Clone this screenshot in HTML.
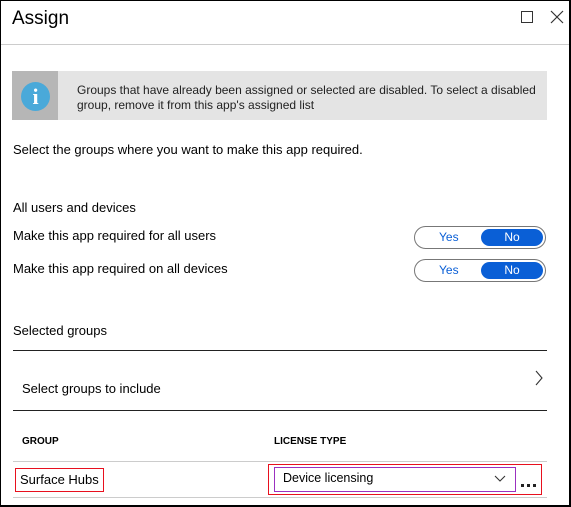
<!DOCTYPE html>
<html><head><meta charset="utf-8"><style>
*{margin:0;padding:0;box-sizing:border-box}
body{width:571px;height:507px;overflow:hidden;background:#fff;font-family:"Liberation Sans",sans-serif;color:#000;position:relative}
.frame{position:absolute;left:0;top:0;width:571px;height:507px;border:1px solid #000;border-right-width:2px;border-bottom-width:2px}
.a{position:absolute;white-space:nowrap}
.t{font-size:13px}
.line{position:absolute;height:1px}
.tog{position:absolute;left:414px;width:132px;height:23px;border:1px solid #777;border-radius:12px}
.tog .y{position:absolute;left:24px;top:3px;font-size:12px;color:#0a5fd6}
.tog .n{position:absolute;left:66px;top:2px;width:62px;height:17px;border-radius:9px;background:#0a5fd6;color:#fff;font-size:12px;text-align:center;line-height:17px}
.dot{position:absolute;width:3px;height:3px;background:#222;top:484px}
</style></head><body>
<div class="frame"></div>
<div class="a" style="left:12px;top:8px;font-size:19px">Assign</div>
<div class="a" style="left:521px;top:11px;width:12px;height:12px;border:1px solid #333"></div>
<svg class="a" style="left:550px;top:10px" width="14" height="14"><path d="M1 1L13 13M13 1L1 13" stroke="#333" stroke-width="1.2"/></svg>
<div class="line" style="left:1px;top:44px;width:568px;background:#ccc"></div>
<div class="a" style="left:12px;top:71px;width:535px;height:49px;background:#e4e4e4"></div>
<div class="a" style="left:12px;top:71px;width:46px;height:49px;background:#b6b6b6"></div>
<div class="a" style="left:21px;top:82px;width:29px;height:29px;border-radius:50%;background:#4aa9d9;color:#fff;font-family:'Liberation Serif',serif;font-weight:bold;font-size:22px;text-align:center;line-height:29px">i</div>
<div class="a" style="left:77px;top:83px;font-size:12px;line-height:15px;color:#222">Groups that have already been assigned or selected are disabled. To select a disabled<br>group, remove it from this app's assigned list</div>
<div class="a t" style="left:13px;top:142px">Select the groups where you want to make this app required.</div>
<div class="a t" style="left:13px;top:200px">All users and devices</div>
<div class="a t" style="left:13px;top:228px">Make this app required for all users</div>
<div class="a t" style="left:13px;top:261px">Make this app required on all devices</div>
<div class="tog" style="top:226px"><span class="y">Yes</span><span class="n">No</span></div>
<div class="tog" style="top:259px"><span class="y">Yes</span><span class="n">No</span></div>
<div class="a t" style="left:13px;top:323px">Selected groups</div>
<div class="line" style="left:13px;top:350px;width:534px;background:#222"></div>
<div class="a t" style="left:22px;top:381px">Select groups to include</div>
<svg class="a" style="left:534px;top:370px" width="10" height="16"><path d="M2 1L8 8L2 15" stroke="#333" fill="none" stroke-width="1.1"/></svg>
<div class="line" style="left:13px;top:410px;width:534px;background:#222"></div>
<div class="a" style="left:22px;top:436px;font-size:10px;font-weight:bold">GROUP</div>
<div class="a" style="left:274px;top:436px;font-size:10px;font-weight:bold">LICENSE TYPE</div>
<div class="line" style="left:13px;top:461px;width:534px;background:#ccc"></div>
<div class="line" style="left:13px;top:497px;width:534px;background:#ccc"></div>
<div class="a" style="left:15px;top:468px;width:89px;height:24px;border:1px solid #e8101e"></div>
<div class="a t" style="left:20px;top:472px">Surface Hubs</div>
<div class="a" style="left:268px;top:464px;width:274px;height:31px;border:1px solid #e8101e"></div>
<div class="a" style="left:274px;top:467px;width:242px;height:25px;border:1px solid #9b30c0"></div>
<div class="a" style="left:283px;top:471px;font-size:12.5px">Device licensing</div>
<svg class="a" style="left:494px;top:475px" width="12" height="8"><path d="M1 1L6 6L11 1" stroke="#333" fill="none" stroke-width="1.1"/></svg>
<div class="dot" style="left:521px"></div><div class="dot" style="left:527px"></div><div class="dot" style="left:533px"></div>
</body></html>
